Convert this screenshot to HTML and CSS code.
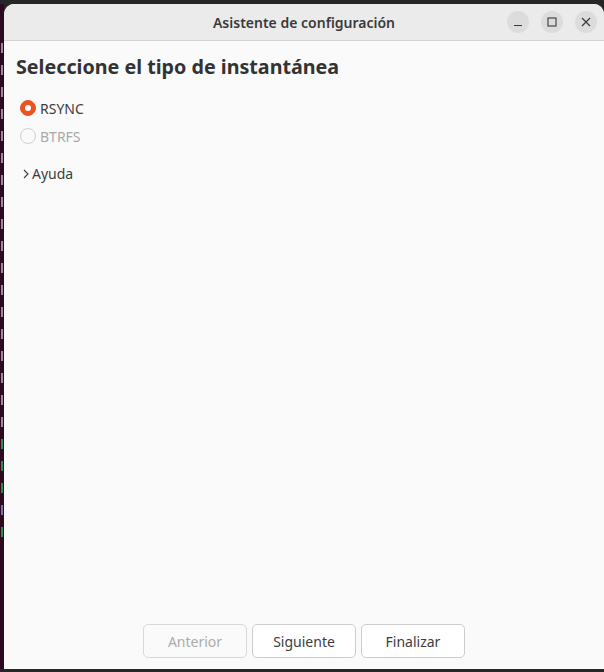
FILE: index.html
```html
<!DOCTYPE html>
<html lang="es">
<head>
<meta charset="utf-8">
<title>Asistente de configuración</title>
<link rel="stylesheet" href="styles.css">
</head>
<body>
<div class="desk">
  <div class="term">
    <span class="tl"></span><span class="tl"></span><span class="tl"></span><span class="tl"></span><span class="tl"></span><span class="tl"></span><span class="tl"></span><span class="tl"></span><span class="tl"></span><span class="tl"></span><span class="tl"></span><span class="tl"></span><span class="tl"></span><span class="tl"></span><span class="tl"></span><span class="tl"></span><span class="tl"></span><span class="tl"></span><span class="tl g"></span><span class="tl g"></span><span class="tl g"></span><span class="tl b"></span><span class="tl g"></span>
  </div>
  <div class="window">
    <header class="titlebar">
      <div class="title">Asistente de configuración</div>
      <div class="controls">
        <span class="ctl"><svg width="10" height="10" viewBox="0 0 10 10"><line x1="1" y1="8.5" x2="9" y2="8.5" stroke="#3a3a3a" stroke-width="1.2"/></svg></span>
        <span class="ctl"><svg width="10" height="10" viewBox="0 0 10 10"><rect x="1" y="1" width="8" height="8" fill="none" stroke="#3a3a3a" stroke-width="1.1"/></svg></span>
        <span class="ctl"><svg width="10" height="10" viewBox="0 0 10 10"><path d="M1 1 L9 9 M9 1 L1 9" stroke="#3a3a3a" stroke-width="1.2"/></svg></span>
      </div>
    </header>
    <main class="content">
      <h1 class="heading">Seleccione el tipo de instantánea</h1>
      <div class="options">
        <label class="radio"><span class="dot on"></span><span>RSYNC</span></label>
        <label class="radio disabled"><span class="dot"></span><span>BTRFS</span></label>
      </div>
      <div class="expander">
        <svg width="8" height="10" viewBox="0 0 8 10"><polyline points="2,1 6,5 2,9" fill="none" stroke="#3d3d3d" stroke-width="1.1"/></svg>
        <span>Ayuda</span>
      </div>
    </main>
    <footer class="actions">
      <button class="btn" disabled>Anterior</button>
      <button class="btn">Siguiente</button>
      <button class="btn">Finalizar</button>
    </footer>
  </div>
</div>
</body>
</html>
```
FILE: styles.css
```css
* { box-sizing: border-box; }
html, body { margin: 0; height: 100%; }
body {
  background: #262626;
  overflow: hidden;
  font-family: "Noto Sans", "Open Sans", sans-serif;
  color: #3d3d3d;
}
.desk {
  display: grid;
  grid-template-columns: 4px 1fr;
  padding-top: 4px;
  height: 672px;
}
.term {
  background: #2c0a20;
  height: 665px;
  overflow: hidden;
  display: flex;
  flex-direction: column;
  gap: 12px;
  padding-top: 39px;
}
.tl {
  display: block;
  width: 2px;
  height: 10px;
  margin-left: 1px;
  background: #b9a9b0;
  opacity: 0.8;
}
.tl.g { background: #2fa862; }
.tl.b { background: #8090d8; }
.window {
  background: #fafafa;
  height: 665px;
  border-radius: 10px 10px 0 0;
  display: flex;
  flex-direction: column;
  overflow: hidden;
}
.titlebar {
  height: 37px;
  background: #ebebeb;
  border-bottom: 1px solid #d2d2d2;
  display: flex;
  align-items: center;
  justify-content: center;
  position: relative;
  flex: none;
}
.title {
  font-size: 14px;
  font-weight: 600;
  color: #3a3a3a;
}
.controls {
  position: absolute;
  right: 7px;
  top: 7px;
  display: flex;
  gap: 12px;
}
.ctl {
  width: 22px;
  height: 22px;
  border-radius: 50%;
  background: #dcdcdc;
  display: flex;
  align-items: center;
  justify-content: center;
}
.content {
  flex: 1;
  padding: 14px 12px 0 12px;
}
.heading {
  margin: 0 0 19px 0;
  font-size: 19.7px;
  font-weight: 700;
  color: #333;
  line-height: 24px;
}
.options { display: flex; flex-direction: column; gap: 8px; padding-left: 4px; }
.radio {
  display: flex;
  align-items: center;
  gap: 4px;
  font-size: 14px;
  height: 20px;
  color: #3d3d3d;
}
.radio.disabled { color: #a9a9a9; }
.dot {
  width: 16px;
  height: 16px;
  border-radius: 50%;
  border: 1px solid #cfcfcf;
  background: #fafafa;
  display: flex;
  align-items: center;
  justify-content: center;
}
.dot.on { background: #e95420; border-color: #e95420; }
.dot.on::after {
  content: "";
  width: 6px;
  height: 6px;
  border-radius: 50%;
  background: #fff;
}
.expander {
  margin-top: 18px;
  display: flex;
  align-items: center;
  gap: 2px;
  padding-left: 6px;
  font-size: 14px;
  color: #3d3d3d;
}
.actions {
  flex: none;
  display: flex;
  justify-content: center;
  gap: 5px;
  padding-bottom: 11px;
}
.btn {
  width: 104px;
  height: 34px;
  border: 1px solid #cdcdcd;
  border-radius: 5px;
  background: #fff;
  font-family: inherit;
  font-size: 14px;
  color: #3d3d3d;
}
.btn:disabled { color: #ababab; background: #fafafa; border-color: #d8d8d8; }
```
